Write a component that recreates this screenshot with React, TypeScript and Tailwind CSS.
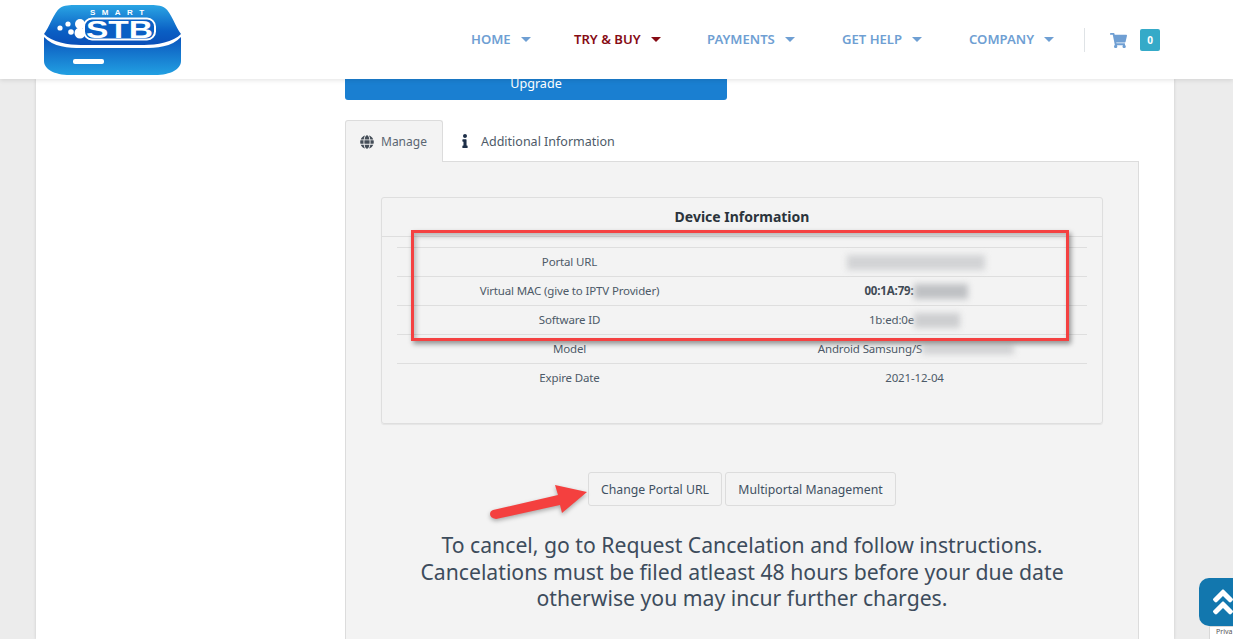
import { FaGlobe, FaInfo, FaShoppingCart, FaAngleDoubleUp } from "react-icons/fa"

const navItems = [
  { label: "HOME", width: "w-[103px]", active: false },
  { label: "TRY & BUY", width: "w-[133px]", active: true },
  { label: "PAYMENTS", width: "w-[135px]", active: false },
  { label: "GET HELP", width: "w-[127px]", active: false },
  { label: "COMPANY", width: "w-[115px]", active: false },
]

const Logo = () => (
  <svg width="138" height="72" viewBox="0 0 138 72" className="mt-[4px]">
    <defs>
      <linearGradient id="top" x1="0" y1="0" x2="0" y2="1">
        <stop offset="0" stopColor="#2aa5e4" />
        <stop offset="0.65" stopColor="#0a5fc4" />
        <stop offset="1" stopColor="#0a4fb8" />
      </linearGradient>
      <linearGradient id="bottom" x1="0" y1="0" x2="0" y2="1">
        <stop offset="0" stopColor="#0a55bd" />
        <stop offset="1" stopColor="#22a0e2" />
      </linearGradient>
    </defs>
    <path d="M0 33 L0 57 C0 65 10 71 26 71 L111 71 C127 71 137 65 137 57 L137 33 C128 43 112 44 100 44 L37 44 C25 44 9 43 0 33 Z" fill="url(#bottom)" />
    <path d="M0 30 C5 24 10 8 16 4 C20 1 26 1 32 1 L105 1 C111 1 117 1 121 4 C127 8 132 24 137 30 C130 38 112 41 100 41 L37 41 C25 41 7 38 0 30 Z" fill="url(#top)" />
    <rect x="29" y="55" width="31" height="5" rx="2" fill="#fff" />
    <text x="46" y="11" fill="#fff" fontSize="8" fontWeight="700" letterSpacing="6.4" fontFamily="'Liberation Sans', sans-serif">SMART</text>
    <circle cx="16" cy="24" r="2.6" fill="#fff" />
    <circle cx="24" cy="20" r="2.6" fill="#fff" />
    <circle cx="27" cy="28" r="2.8" fill="#fff" />
    <circle cx="36" cy="20" r="5" fill="#fff" />
    <circle cx="36" cy="29" r="5.5" fill="#fff" />
    <rect x="40" y="14.5" width="71" height="21" rx="8" fill="#0a5fc4" stroke="#fff" strokeWidth="2" />
    <text x="42" y="33.5" fill="#fff" fontSize="24" fontWeight="700" textLength="67" lengthAdjust="spacingAndGlyphs" fontFamily="'Liberation Sans', sans-serif">STB</text>
  </svg>
)

const Row = ({ label, children }: { label: string; children: React.ReactNode }) => (
  <div className="grid grid-cols-2 h-[29px] border-t border-[#dedede] items-center text-center text-[#4d5a68]">
    <div>{label}</div>
    <div className="flex justify-center items-center">{children}</div>
  </div>
)

const Blur = ({ className }: { className: string }) => (
  <span className={"block blur-[3px] " + className} />
)

const App = () => {
  return (
    <div className="relative h-[639px] overflow-hidden bg-[#ececec] text-[11.5px] tracking-[-0.15px] font-['Noto_Sans',sans-serif]">
      <header className="relative z-10 h-[79px] bg-white shadow-[0_1px_5px_rgba(0,0,0,0.12)] flex tracking-normal">
        <div className="ml-[44px] w-[427px]">
          <Logo />
        </div>
        <nav className="flex items-center h-[79px] pt-px text-[13.1px] font-semibold">
          {navItems.map((item) => (
            <div key={item.label} className={"flex items-center gap-[10px] " + item.width + (item.active ? " text-[#860b14]" : " text-[#6f9fd3]")}>
              <span>{item.label}</span>
              <span className={"w-0 h-0 border-x-[5px] border-x-transparent border-t-[5px] " + (item.active ? "border-t-[#860b14]" : "border-t-[#6f9fd3]")} />
            </div>
          ))}
          <div className="w-px h-[24px] bg-[#dfe3e6]" />
          <FaShoppingCart className="ml-[25px] text-[#6f9fd3]" size={17} />
          <span className="ml-[13px] w-[20px] h-[22px] rounded-[2px] bg-[#35aac8] text-white text-[10px] font-bold flex items-center justify-center">0</span>
        </nav>
      </header>

      <main className="ml-[36px] w-[1138px] h-[560px] bg-white shadow-[0_0_3px_rgba(0,0,0,0.15)] pl-[309px] pr-[35px]">
        <button className="flex justify-center w-[382px] h-[21px] rounded-b-[3px] bg-[#1a7fd1] text-white text-[12.6px] tracking-normal leading-[9px]">Upgrade</button>

        <div className="flex mt-[20px] h-[42px] relative z-[1] tracking-normal text-[12px]">
          <div className="w-[98px] h-[42px] flex items-center pl-[14px] gap-[7px] bg-[#f3f3f3] border border-b-0 border-[#dcdcdc] rounded-t-[3px] text-[#5b6672]">
            <FaGlobe size={14} className="text-[#444d57]" />
            <span>Manage</span>
          </div>
          <div className="flex items-center pl-[15px] gap-[9px] text-[12.5px] text-[#4d5a68]">
            <FaInfo size={14} className="text-[#1d2f48]" />
            <span className="pt-[2px]">Additional Information</span>
          </div>
        </div>

        <section className="-mt-px h-[500px] bg-[#f3f3f3] border border-[#dcdcdc] px-[35px] pt-[35px]">
          <div className="h-[227px] border border-[#dedede] rounded-[3px] shadow-[0_1px_1px_rgba(0,0,0,0.06)]">
            <h3 className="h-[39px] pb-[2px] border-b border-[#dedede] flex items-center justify-center text-[14px] tracking-normal font-bold text-[#2b333b]">Device Information</h3>
            <div className="mx-[15px] mt-[10px] border-b border-[#dedede]">
              <Row label="Portal URL">
                <Blur className="w-[138px] h-[15px] ml-[3px] bg-[#d2d3d5]" />
              </Row>
              <Row label="Virtual MAC (give to IPTV Provider)">
                <span className="ml-[3px] font-bold text-[#3f4a55]">00:1A:79:</span>
                <Blur className="w-[54px] h-[15px] bg-[#bfc1c4]" />
              </Row>
              <Row label="Software ID">
                <span>1b:ed:0e</span>
                <Blur className="w-[46px] h-[15px] bg-[#cdced0]" />
              </Row>
              <Row label="Model">
                <span className="ml-[3px]">Android Samsung/S</span>
                <Blur className="w-[92px] h-[9px] bg-[#cfd0d2]" />
              </Row>
            </div>
            <div className="mx-[15px] grid grid-cols-2 h-[28px] items-center text-center text-[#4d5a68]">
              <div>Expire Date</div>
              <div>2021-12-04</div>
            </div>
          </div>

          <div className="flex justify-center gap-[3px] mt-[48px] text-[12.25px] tracking-normal">
            <button className="w-[134px] h-[34px] pt-[2px] border border-[#dcdcdc] rounded-[3px] text-[#3f5062]">Change Portal URL</button>
            <button className="w-[171px] h-[34px] pt-[2px] border border-[#dcdcdc] rounded-[3px] text-[#3f5062]">Multiportal Management</button>
          </div>

          <p className="mt-[26px] text-center text-[21.2px] tracking-normal leading-[26.5px] text-[#3d4c5c]">
            To cancel, go to Request Cancelation and follow instructions.
            <br />
            Cancelations must be filed atleast 48 hours before your due date
            <br />
            otherwise you may incur further charges.
          </p>
        </section>
      </main>

      {/* annotations on top of the screenshot */}
      <div className="absolute left-[411px] top-[230px] w-[658px] h-[111px] border-[3px] border-[#f44141] shadow-[2px_3px_5px_rgba(0,0,0,0.4),inset_2px_3px_5px_rgba(0,0,0,0.25)]" />
      <svg className="absolute left-[488px] top-[482px] drop-shadow-[0_2px_2px_rgba(0,0,0,0.3)]" width="102" height="42" viewBox="0 0 102 42">
        <path d="M5 28 L70 13 L67 3 L99 10 L74 31 L72 23 L8 37 Q2 36 2 32 Q2 29 5 28 Z" fill="#f4403f" />
      </svg>

      <div className="absolute right-0 top-[578px] w-[34px] h-[48px] bg-[#1277ae] rounded-l-[10px] flex items-center justify-center">
        <FaAngleDoubleUp className="text-white ml-[14px] shrink-0" size={32} />
      </div>
      <div className="absolute right-0 top-[626px] w-[24px] h-[13px] bg-white border-l border-t border-[#d8d8d8] pl-[6px] text-[7px] tracking-normal text-[#555] overflow-hidden">Priva</div>
    </div>
  )
}

export default App
